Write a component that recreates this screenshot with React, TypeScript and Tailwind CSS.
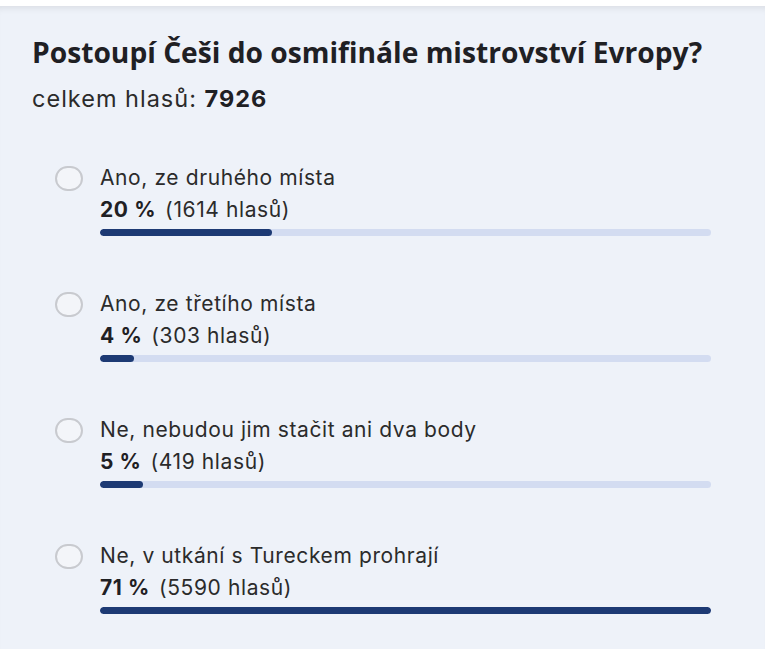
const options = [
  { label: "Ano, ze druhého místa", pct: 20, votes: 1614 },
  { label: "Ano, ze třetího místa", pct: 4, votes: 303 },
  { label: "Ne, nebudou jim stačit ani dva body", pct: 5, votes: 419 },
  { label: "Ne, v utkání s Tureckem prohrají", pct: 71, votes: 5590 },
];

export default function App() {
  const max = Math.max(...options.map((o) => o.pct));
  return (
    <div className="w-[770px] h-[649px] bg-white pt-[6px] overflow-hidden">
      <div className="h-full mr-[5px] bg-[#eef2f9] shadow-[inset_0_7px_7px_-5px_rgba(0,0,0,0.09)] pl-[32px] pt-[28px] font-['Inter',sans-serif] text-[#2b2b2b]">
        {/* Question */}
        <h1 className="font-['Open_Sans',sans-serif] font-bold text-[28.2px] leading-[36px] text-[#1f2024]">
          Postoupí Češi do osmifinále mistrovství Evropy?
        </h1>
        <p className="mt-[16px] text-[23.5px] leading-[26px] tracking-[1px]">
          celkem hlasů: <span className="font-bold text-[#1f2024]">7926</span>
        </p>

        {/* Options */}
        <div className="mt-[53px] flex flex-col gap-[55px]">
          {options.map((o) => (
            <div key={o.label} className="flex items-start">
              <div className="ml-[23px] mt-[1px] w-[28px] h-[25px] rounded-full border-2 border-[#c8cacf] bg-[#f3f5f9] shrink-0" />
              <div className="ml-[17px] w-[611px]">
                <div className="text-[21px] leading-[26px] tracking-[0.6px]">{o.label}</div>
                <div className="mt-[6px] text-[21px] leading-[26px] tracking-[0.6px]">
                  <span className="font-bold text-[#1f2024]">{o.pct} %</span>
                  <span className="ml-[9px]">({o.votes} hlasů)</span>
                </div>
                <div className="mt-[6px] h-[7px] rounded-full bg-[#d3dcf1] overflow-hidden">
                  <div
                    className="h-full rounded-full bg-[#1d3a74]"
                    style={{ width: `${(o.pct / max) * 100}%` }}
                  />
                </div>
              </div>
            </div>
          ))}
        </div>
      </div>
    </div>
  );
}
